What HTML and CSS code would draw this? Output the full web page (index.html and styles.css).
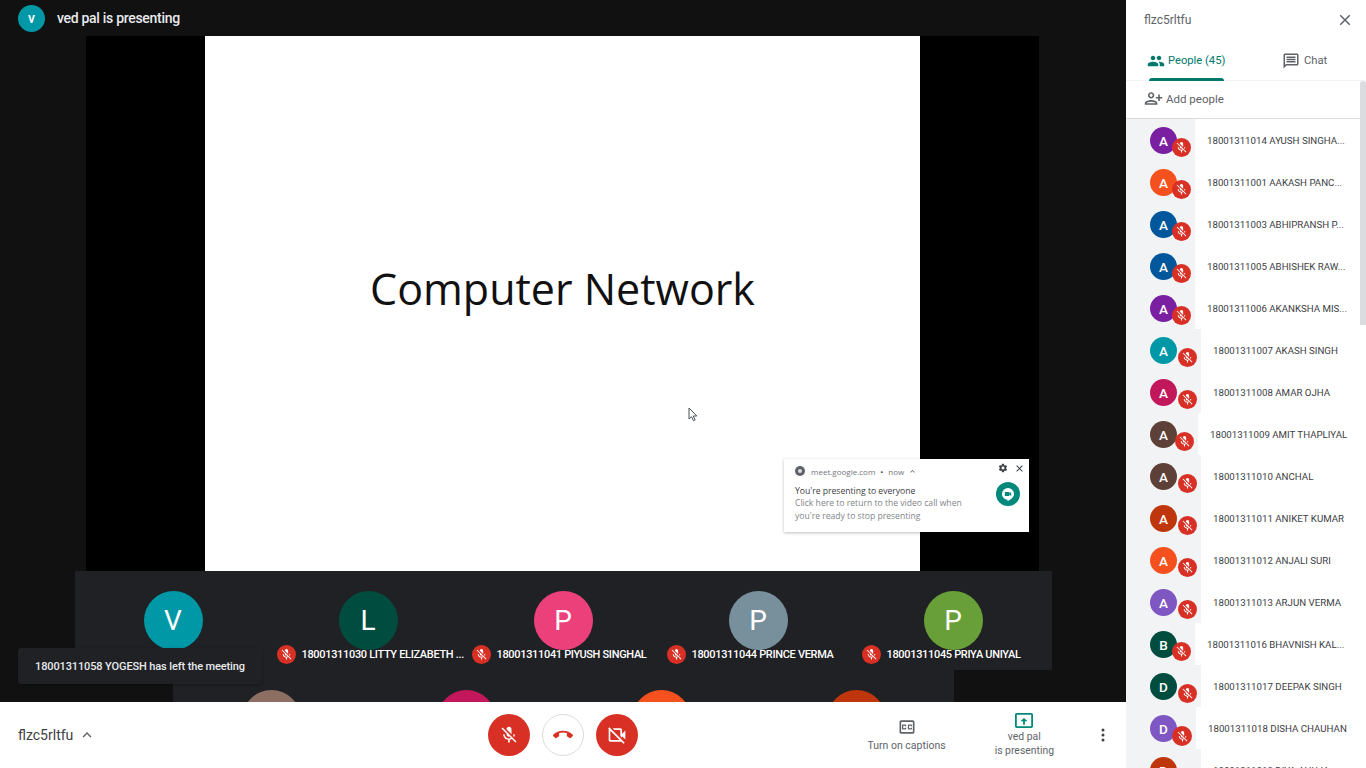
FILE: index.html
```html
<!DOCTYPE html>
<html>
<head>
  <meta charset="utf-8">
  <title>Meet</title>
  <link rel="stylesheet" href="styles.css">
</head>
<body>
  <svg class="defs" width="0" height="0">
    <symbol id="mic-off" viewBox="0 0 24 24"><path d="M19 11h-1.7c0 .74-.16 1.43-.43 2.05l1.23 1.23c.56-.98.9-2.09.9-3.28zm-4.02.17c0-.06.02-.11.02-.17V5c0-1.66-1.34-3-3-3S9 3.34 9 5v.18l5.98 5.99zM4.27 3L3 4.27l6.01 6.01V11c0 1.66 1.33 3 2.99 3 .22 0 .44-.03.65-.08l1.66 1.66c-.71.33-1.5.52-2.31.52-2.76 0-5.3-2.1-5.3-5.1H5c0 3.41 2.72 6.23 6 6.72V21h2v-3.28c.91-.13 1.77-.45 2.54-.9L19.73 21 21 19.73 4.27 3z"/></symbol>
    <symbol id="close" viewBox="0 0 24 24"><path d="M19 6.41L17.59 5 12 10.59 6.41 5 5 6.41 10.59 12 5 17.59 6.41 19 12 13.41 17.59 19 19 17.59 13.41 12z"/></symbol>
  </svg>

  <div class="main">
    <div class="stage">
      <div class="topbar">
        <div class="topbar-avatar">v</div>
        <div class="topbar-text">ved pal is presenting</div>
      </div>

      <div class="screen">
        <div class="slide">
          <div class="slide-title">Computer Network</div>
        </div>
        <svg class="cursor" width="10" height="15" viewBox="0 0 10 15"><path d="M1 1v11l2.5-2.3 2 4 1.7-.8-2-3.9H8.8z" fill="#fff" stroke="#4a4f57" stroke-width="1"/></svg>

        <div class="notif">
          <div class="notif-top">
            <span class="notif-chrome"><span class="notif-chrome-dot"></span></span>
            <span>meet.google.com</span>
            <span class="notif-sep">•</span>
            <span>now</span>
            <svg class="notif-caret" width="9" height="9" viewBox="0 0 24 24"><path d="M12 8l-6 6 1.41 1.41L12 10.83l4.59 4.58L18 14z"/></svg>
          </div>
          <div class="notif-title">You're presenting to everyone</div>
          <div class="notif-body">Click here to return to the video call when<br>you're ready to stop presenting</div>
          <svg class="notif-gear" width="10" height="10" viewBox="0 0 24 24"><path d="M19.4 13c.1-.3.1-.6.1-1s0-.7-.1-1l2.1-1.6c.2-.1.2-.4.1-.6l-2-3.5c-.1-.2-.4-.3-.6-.2l-2.5 1c-.5-.4-1.1-.7-1.7-1L14.4 2.500c0-.3-.2-.5-.5-.5h-4c-.2 0-.4.2-.5.4L9 5.100c-.6.200-1.100.600-1.700 1l-2.400-1c-.3-.1-.5 0-.7.2l-2 3.500c-.1.200-.1.500.1.600L4.500 11c0 .3-.1.700-.1 1s0 .7.1 1l-2.100 1.600c-.2.100-.2.400-.1.600l2 3.500c.1.200.4.300.6.200l2.500-1c.5.400 1.100.700 1.700 1l.4 2.600c0 .3.200.5.500.5h4c.200 0 .500-.2.500-.4l.4-2.600c.6-.3 1.200-.6 1.700-1l2.500 1c.2.100.5 0 .6-.2l2-3.500c.1-.2.1-.5-.1-.6zM12 15.500c-1.900 0-3.500-1.600-3.500-3.500s1.600-3.500 3.500-3.500 3.500 1.600 3.500 3.500-1.600 3.500-3.500 3.500z" fill="#3c4043"/></svg>
          <svg class="notif-close" width="11" height="11"><use href="#close"/></svg>
          <div class="notif-app">
            <svg width="14" height="14" viewBox="0 0 14 14"><path d="M7 1a6 6 0 0 0-6 6c0 3 2.500 5.500 5.500 5.700V14C10 12.500 13 10 13 7a6 6 0 0 0-6-6z" fill="#fff"/><path d="M3.800 5h4.600v1.500L10.200 5v4L8.400 7.500V9H3.800z" fill="#00897b"/></svg>
          </div>
        </div>
      </div>

      <div class="strip">
        <div class="tiles tiles-first">
          <div class="tile"><div class="tile-avatar c-teal">V</div></div>
          <div class="tile">
            <div class="tile-avatar c-green">L</div>
            <div class="tile-label"><span class="badge"><svg><use href="#mic-off"/></svg></span><span>18001311030 LITTY ELIZABETH ...</span></div>
          </div>
          <div class="tile">
            <div class="tile-avatar c-rose">P</div>
            <div class="tile-label"><span class="badge"><svg><use href="#mic-off"/></svg></span><span>18001311041 PIYUSH SINGHAL</span></div>
          </div>
          <div class="tile">
            <div class="tile-avatar c-slate">P</div>
            <div class="tile-label"><span class="badge"><svg><use href="#mic-off"/></svg></span><span>18001311044 PRINCE VERMA</span></div>
          </div>
          <div class="tile">
            <div class="tile-avatar c-lime">P</div>
            <div class="tile-label"><span class="badge"><svg><use href="#mic-off"/></svg></span><span>18001311045 PRIYA UNIYAL</span></div>
          </div>
        </div>
        <div class="tiles tiles-second">
          <div class="tile"><div class="tile-avatar c-tan"></div></div>
          <div class="tile"><div class="tile-avatar c-pink"></div></div>
          <div class="tile"><div class="tile-avatar c-orange"></div></div>
          <div class="tile"><div class="tile-avatar c-rust"></div></div>
        </div>
      </div>

      <div class="toast">18001311058 YOGESH has left the meeting</div>
    </div>

    <div class="bottombar">
      <div class="meeting">
        <span>flzc5rltfu</span>
        <svg width="18" height="18" viewBox="0 0 24 24"><path d="M12 8l-6 6 1.41 1.41L12 10.83l4.59 4.58L18 14z"/></svg>
      </div>
      <div class="controls">
        <div class="round round-red"><svg width="20" height="20"><use href="#mic-off"/></svg></div>
        <div class="round round-white"><svg width="20" height="20" viewBox="0 0 24 24"><path d="M12 9c-1.600 0-3.150.25-4.600.72v3.100c0 .39-.23.74-.56.9-.98.49-1.870 1.120-2.660 1.850-.18.18-.43.28-.7.28-.28 0-.53-.11-.71-.29L.29 13.080c-.18-.17-.29-.42-.29-.7 0-.28.11-.53.29-.71C3.340 8.780 7.460 7 12 7s8.660 1.780 11.710 4.670c.18.18.29.43.29.71 0 .28-.11.53-.29.71l-2.480 2.480c-.18.18-.43.29-.71.29-.27 0-.52-.11-.7-.28-.79-.74-1.690-1.360-2.670-1.850-.33-.16-.56-.5-.56-.9v-3.100C15.150 9.250 13.600 9 12 9z"/></svg></div>
        <div class="round round-red"><svg width="20" height="20" viewBox="0 0 24 24"><path d="M18 10.480V6c0-1.100-.9-2-2-2H6.830l2 2H16v7.170l2 2v-1.650l4 3.980v-11l-4 3.980zM16 16L6 6 4 4 2.810 2.810 1.390 4.220l.85.85C2.090 5.350 2 5.660 2 6v12c0 1.100.9 2 2 2h12c.34 0 .65-.09.93-.24l2.850 2.850 1.410-1.410L18 18l-2-2zM4 18V6.830L15.170 18H4z"/></svg></div>
      </div>
      <div class="actions">
        <div class="action action-captions">
          <svg width="20" height="20" viewBox="0 0 24 24"><path d="M19 4H5c-1.110 0-2 .9-2 2v12c0 1.100.89 2 2 2h14c1.100 0 2-.9 2-2V6c0-1.100-.9-2-2-2zm0 14H5V6h14v12zM7 15h3c.55 0 1-.45 1-1v-1H9.500v.5h-2v-3h2v.5H11v-1c0-.55-.45-1-1-1H7c-.55 0-1 .45-1 1v4c0 .55.45 1 1 1zm7 0h3c.55 0 1-.45 1-1v-1h-1.500v.5h-2v-3h2v.5H18v-1c0-.55-.45-1-1-1h-3c-.55 0-1 .45-1 1v4c0 .55.45 1 1 1z"/></svg>
          <div>Turn on captions</div>
        </div>
        <div class="action action-present">
          <svg width="18" height="15" viewBox="2 3 20 18" preserveAspectRatio="none"><path d="M20 3H4c-1.100 0-2 .9-2 2v14c0 1.100.9 2 2 2h16c1.100 0 2-.9 2-2V5c0-1.100-.9-2-2-2zm0 16H4V5h16v14zM13 17h-2v-4H8l4-4 4 4h-3z"/></svg>
          <div>ved pal<br>is presenting</div>
        </div>
        <svg class="more" width="4" height="14" viewBox="0 0 4 14"><circle cx="2" cy="2" r="1.500"/><circle cx="2" cy="7" r="1.500"/><circle cx="2" cy="12" r="1.500"/></svg>
      </div>
    </div>
  </div>

  <div class="side">
    <div class="side-head">
      <span>flzc5rltfu</span>
      <svg width="18" height="18"><use href="#close"/></svg>
    </div>
    <div class="tabs">
      <div class="tab tab-on">
        <svg width="18" height="18" viewBox="0 0 24 24"><path d="M16 11c1.660 0 2.990-1.340 2.990-3S17.660 5 16 5c-1.660 0-3 1.340-3 3s1.340 3 3 3zm-8 0c1.660 0 2.990-1.340 2.990-3S9.660 5 8 5C6.340 5 5 6.340 5 8s1.340 3 3 3zm0 2c-2.330 0-7 1.170-7 3.500V19h14v-2.500c0-2.330-4.670-3.500-7-3.500zm8 0c-.29 0-.62.02-.97.05 1.160.84 1.970 1.970 1.970 3.450V19h6v-2.500c0-2.330-4.670-3.500-7-3.500z"/></svg>
        <span>People (45)</span>
      </div>
      <div class="tab">
        <svg width="18" height="18" viewBox="0 0 24 24"><path d="M20 2H4c-1.100 0-1.990.9-1.990 2L2 22l4-4h14c1.100 0 2-.9 2-2V4c0-1.100-.9-2-2-2zm0 14H5.170L4 17.170V4h16v12zM6 12h12v2H6zm0-3h12v2H6zm0-3h12v2H6z"/></svg>
        <span>Chat</span>
      </div>
    </div>
    <div class="add">
      <svg class="add-icon" width="19" height="19" viewBox="0 0 24 24"><path d="M15 12c2.210 0 4-1.790 4-4s-1.790-4-4-4-4 1.790-4 4 1.790 4 4 4zm0-6c1.100 0 2 .9 2 2s-.9 2-2 2-2-.9-2-2 .9-2 2-2zm0 8c-2.670 0-8 1.340-8 4v2h16v-2c0-2.660-5.330-4-8-4zm-6 4c.22-.72 3.310-2 6-2 2.700 0 5.800 1.290 6 2H9zm-3-3v-3h3v-2H6V7H4v3H1v2h3v3h2z"/></svg>
      <span>Add people</span>
    </div>

    <div class="list">
      <div class="person"><div class="person-left w69"><div class="person-avatar c-purple">A</div><span class="badge"><svg><use href="#mic-off"/></svg></span></div><div class="person-name">18001311014 AYUSH SINGHA...</div></div>
      <div class="person"><div class="person-left w69"><div class="person-avatar c-orange">A</div><span class="badge"><svg><use href="#mic-off"/></svg></span></div><div class="person-name">18001311001 AAKASH PANC...</div></div>
      <div class="person"><div class="person-left w69"><div class="person-avatar c-blue">A</div><span class="badge"><svg><use href="#mic-off"/></svg></span></div><div class="person-name">18001311003 ABHIPRANSH P...</div></div>
      <div class="person"><div class="person-left w69"><div class="person-avatar c-blue">A</div><span class="badge"><svg><use href="#mic-off"/></svg></span></div><div class="person-name">18001311005 ABHISHEK RAW...</div></div>
      <div class="person"><div class="person-left w69"><div class="person-avatar c-purple">A</div><span class="badge"><svg><use href="#mic-off"/></svg></span></div><div class="person-name">18001311006 AKANKSHA MIS...</div></div>
      <div class="person"><div class="person-left w75"><div class="person-avatar c-teal">A</div><span class="badge"><svg><use href="#mic-off"/></svg></span></div><div class="person-name">18001311007 AKASH SINGH</div></div>
      <div class="person"><div class="person-left w75"><div class="person-avatar c-pink">A</div><span class="badge"><svg><use href="#mic-off"/></svg></span></div><div class="person-name">18001311008 AMAR OJHA</div></div>
      <div class="person"><div class="person-left w72"><div class="person-avatar c-brown">A</div><span class="badge"><svg><use href="#mic-off"/></svg></span></div><div class="person-name">18001311009 AMIT THAPLIYAL</div></div>
      <div class="person"><div class="person-left w75"><div class="person-avatar c-brown">A</div><span class="badge"><svg><use href="#mic-off"/></svg></span></div><div class="person-name">18001311010 ANCHAL</div></div>
      <div class="person"><div class="person-left w75"><div class="person-avatar c-rust">A</div><span class="badge"><svg><use href="#mic-off"/></svg></span></div><div class="person-name">18001311011 ANIKET KUMAR</div></div>
      <div class="person"><div class="person-left w75"><div class="person-avatar c-orange">A</div><span class="badge"><svg><use href="#mic-off"/></svg></span></div><div class="person-name">18001311012 ANJALI SURI</div></div>
      <div class="person"><div class="person-left w75"><div class="person-avatar c-violet">A</div><span class="badge"><svg><use href="#mic-off"/></svg></span></div><div class="person-name">18001311013 ARJUN VERMA</div></div>
      <div class="person"><div class="person-left w69"><div class="person-avatar c-green">B</div><span class="badge"><svg><use href="#mic-off"/></svg></span></div><div class="person-name">18001311016 BHAVNISH KAL...</div></div>
      <div class="person"><div class="person-left w75"><div class="person-avatar c-green">D</div><span class="badge"><svg><use href="#mic-off"/></svg></span></div><div class="person-name">18001311017 DEEPAK SINGH</div></div>
      <div class="person"><div class="person-left w70"><div class="person-avatar c-violet">D</div><span class="badge badge-big"><svg><use href="#mic-off"/></svg></span></div><div class="person-name">18001311018 DISHA CHAUHAN</div></div>
      <div class="person"><div class="person-left w75"><div class="person-avatar c-rust">D</div><span class="badge"><svg><use href="#mic-off"/></svg></span></div><div class="person-name">18001311019 DIYA AHUJA</div></div>
    </div>
    <div class="thumb"></div>
  </div>
</body>
</html>
```

FILE: styles.css
```css
* { box-sizing: border-box; }
html, body { height: 100%; }
body { margin: 0; display: flex; height: 768px; overflow: hidden; font-family: Roboto, "Liberation Sans", sans-serif; background: #fff; color: #3c4043; }
.defs { position: absolute; }

.main { width: 1126px; display: flex; flex-direction: column; }
.stage { position: relative; height: 702px; background: #111; overflow: hidden; display: flex; flex-direction: column; align-items: center; }

.topbar { align-self: stretch; height: 36px; display: flex; align-items: center; padding: 0 0 0 18px; margin-top: 0; }
.topbar-avatar { width: 27px; height: 27px; border-radius: 50%; background: #0097a7; color: #fff; font-size: 14px; font-weight: 500; display: flex; align-items: center; justify-content: center; }
.topbar-text { margin-left: 12px; color: #e8eaed; font-size: 14px; font-weight: 500; letter-spacing: -.3px; }

.screen { position: relative; width: 953px; height: 535px; margin-right: 1px; background: #000; display: flex; justify-content: center; }
.slide { width: 715px; background: #fff; display: flex; align-items: center; justify-content: center; padding-bottom: 30px; }
.slide-title { font-family: "Open Sans", sans-serif; font-size: 43px; color: #111; }
.cursor { position: absolute; left: 602px; top: 371px; }

.notif { position: absolute; right: 10px; bottom: 39px; width: 245px; height: 73px; padding: 6px 11px; background: #fff; box-shadow: 0 1px 3px rgba(0,0,0,.25); font-family: "Open Sans", sans-serif; font-size: 8.600px; color: #80868b; }
.notif-top { display: flex; align-items: center; gap: 4px; font-size: 8px; color: #70757a; height: 12px; }
.notif-chrome { width: 10px; height: 10px; border-radius: 50%; background: #5f6368; display: flex; align-items: center; justify-content: center; margin-right: 2px; }
.notif-chrome-dot { width: 4px; height: 4px; border-radius: 50%; background: #dadce0; }
.notif-sep { margin: 0 1px; color: #3c4043; }
.notif-caret { fill: #5f6368; }
.notif-title { margin-top: 8px; color: #3c4043; line-height: 12px; }
.notif-body { line-height: 12.500px; }
.notif-gear { position: absolute; top: 4px; right: 21px; }
.notif-close { position: absolute; top: 4px; right: 4px; fill: #3c4043; }
.notif-app { position: absolute; top: 23px; right: 9px; width: 24px; height: 24px; border-radius: 50%; background: #00897b; display: flex; align-items: center; justify-content: center; }

.strip { display: flex; flex-direction: column; align-items: center; }
.tiles { display: flex; background: #202124; overflow: hidden; padding: 20px 1px 0; }
.tiles-first { height: 99px; }
.tiles-second { height: 32px; padding-right: 0; margin-left: 1px; }
.tile { width: 195px; display: flex; flex-direction: column; align-items: center; }
.tile-avatar { width: 59px; height: 59px; flex: none; border-radius: 50%; color: #fff; font-size: 28px; display: flex; align-items: center; justify-content: center; }
.tile-label { display: flex; align-items: center; gap: 6px; align-self: flex-start; margin: -5px 0 0 6px; position: relative; color: #fff; font-size: 11px; font-weight: 500; letter-spacing: -.32px; white-space: nowrap; }

.badge { flex: none; width: 19px; height: 19px; border-radius: 50%; background: #d93025; display: flex; align-items: center; justify-content: center; }
.badge svg { width: 13px; height: 13px; fill: #fff; }
.badge-big { width: 20px; height: 20px; }

.c-teal { background: #0097a7; }
.c-green { background: #004d40; }
.c-rose { background: #ec407a; }
.c-slate { background: #78909c; }
.c-lime { background: #689f38; }
.c-tan { background: #8d6e63; }
.c-pink { background: #c2185b; }
.c-orange { background: #f4511e; }
.c-rust { background: #bf360c; }
.c-purple { background: #7b1fa2; }
.c-blue { background: #01579b; }
.c-brown { background: #5d4037; }
.c-violet { background: #7e57c2; }

.toast { position: absolute; left: 18px; bottom: 18px; width: 244px; height: 36px; border-radius: 3px; background: #202124; color: #e8eaed; font-size: 11px; font-weight: 500; letter-spacing: -.12px; display: flex; align-items: center; justify-content: center; box-shadow: 0 1px 3px rgba(0,0,0,.3); }

.bottombar { height: 66px; background: #fff; display: grid; grid-template-columns: 1fr auto 1fr; align-items: center; }
.meeting { display: flex; align-items: center; gap: 5px; padding-left: 18px; font-size: 14px; color: #3c4043; }
.meeting svg { fill: #5f6368; }
.controls { display: flex; gap: 12px; }
.round { width: 42px; height: 42px; border-radius: 50%; display: flex; align-items: center; justify-content: center; }
.round-red { background: #d93025; fill: #fff; }
.round-white { border: 1px solid #dadce0; fill: #d93025; }
.actions { display: flex; align-items: center; justify-content: flex-end; padding-right: 21px; }
.action { display: flex; flex-direction: column; align-items: center; font-size: 10.500px; line-height: 14px; text-align: center; color: #5f6368; }
.action-captions { margin-right: 49px; }
.action-captions svg { fill: #5f6368; margin-bottom: 2px; }
.action-present { margin-right: 47px; font-size: 10.400px; }
.action-present svg { fill: #00897b; margin-bottom: 2px; }
.more { fill: #3c4043; }

.side { width: 240px; height: 768px; background: #fff; display: flex; flex-direction: column; position: relative; }
.side-head { height: 41px; display: flex; align-items: center; justify-content: space-between; padding: 0 12px 2px 18px; font-size: 12px; color: #5f6368; fill: #5f6368; }
.tabs { height: 40px; display: flex; border-bottom: 1px solid #f1f3f4; }
.tab { width: 120px; display: flex; align-items: center; gap: 3px; font-size: 11.200px; color: #5f6368; fill: #5f6368; padding: 0 0 0 21px; position: relative; }
.tab + .tab { padding-left: 36px; width: 120px; gap: 4px; }
.tab-on { color: #00796b; fill: #00796b; }
.tab-on::after { content: ""; position: absolute; left: 23px; bottom: -1px; width: 75px; height: 3px; border-radius: 3px 3px 0 0; background: #00796b; }
.add { height: 38px; display: flex; align-items: center; gap: 3px; padding: 0 0 2px 18px; font-size: 11.500px; color: #5f6368; border-bottom: 1px solid #dadce0; }
.add-icon { fill: #5f6368; transform: scaleX(-1); }

.list { flex: 1; overflow: hidden; width: 234px; }
.person { height: 42px; display: flex; }
.person-left { position: relative; flex: none; background: #f1f3f4; }
.w69 { width: 69px; }
.w70 { width: 70px; }
.w72 { width: 72px; }
.w75 { width: 75px; }
.person-avatar { position: absolute; left: 24px; top: 8px; width: 27px; height: 27px; border-radius: 50%; color: #fff; font-size: 13.500px; font-weight: 500; display: flex; align-items: center; justify-content: center; }
.person-left .badge { position: absolute; right: 4px; top: 19px; }
.person-name { margin-left: 12px; align-self: center; margin-top: 1px; font-size: 9.700px; color: #3c4043; white-space: nowrap; }
.thumb { position: absolute; right: 0; top: 81px; width: 6px; height: 244px; border-radius: 3px 3px 0 0; background: #dadce0; }
```
